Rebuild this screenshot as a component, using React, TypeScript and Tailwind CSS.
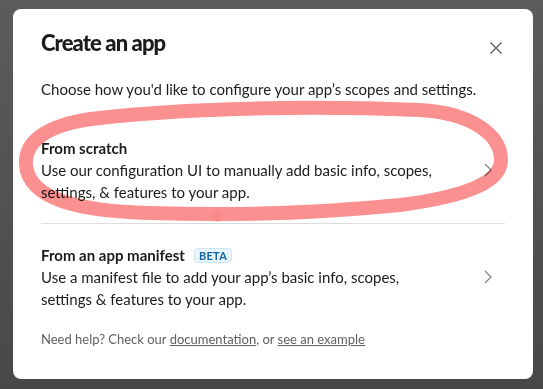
export default function App() {
  const font = { fontFamily: "Lato, 'Noto Sans', sans-serif" };

  return (
    <div
      className="relative min-h-[389px] w-full bg-gradient-to-b from-[#5c5c5c] to-[#484848] pt-[9px] pl-[13px] text-[#1d1c1d]"
      style={font}
    >
      {/* Modal */}
      <div className="w-[520px] h-[370px] rounded-lg bg-white px-7 pt-[19px] pb-8 flex flex-col">
        {/* Header */}
        <div className="flex items-start justify-between">
          <h1 className="text-[22px] leading-[30px] font-black tracking-[-0.9px]">Create an app</h1>
          <button className="mt-[14px] mr-[3px] text-[#616061]" aria-label="Close">
            <svg width="12" height="12" viewBox="0 0 12 12" fill="none">
              <path d="M0.5 0.5 L11.5 11.5 M11.5 0.5 L0.5 11.5" stroke="currentColor" strokeWidth="1.4" />
            </svg>
          </button>
        </div>

        <p className="mt-5 mb-[17px] text-[15px] leading-[22px]">
          Choose how you'd like to configure your app’s scopes and settings.
        </p>

        {/* From scratch */}
        <div className="flex items-center py-5 border-b border-[#dddddd]">
          <div className="flex-1">
            <div className="text-[15px] leading-[22px] font-bold">From scratch</div>
            <div className="max-w-[400px] text-[15px] leading-[22px]">
              Use our configuration UI to manually add basic info, scopes, settings, &amp; features to your app.
            </div>
          </div>
          <Chevron />
        </div>

        {/* From manifest */}
        <div className="flex items-center py-5">
          <div className="flex-1">
            <div className="flex items-center gap-[9px] text-[15px] leading-[22px] font-bold">
              From an app manifest
              <span className="rounded border border-[#cde5f1] bg-[#e8f5fa] px-[4px] text-[11px] leading-[13px] font-bold tracking-[0.3px] text-[#1264a3]">
                BETA
              </span>
            </div>
            <div className="max-w-[400px] text-[15px] leading-[22px]">
              Use a manifest file to add your app’s basic info, scopes, settings &amp; features to your app.
            </div>
          </div>
          <Chevron />
        </div>

        <p className="text-[13px] leading-[18px] text-[#616061]">
          Need help? Check our <span className="underline">documentation</span>, or{" "}
          <span className="underline">see an example</span>
        </p>
      </div>

      {/* Hand-drawn highlight */}
      <svg
        className="pointer-events-none absolute left-0 top-0 mix-blend-multiply"
        width="543"
        height="389"
        viewBox="0 0 543 389"
        fill="none"
      >
        <path
          d="M100 118 C180 109, 300 105, 420 110 C472 113, 501 135, 501 160 C501 181, 470 196, 400 205 C320 213, 240 216, 150 213 C80 211, 29 200, 26 165 C24 140, 50 123, 100 118 Z"
          stroke="#fb9090"
          strokeWidth="14"
          strokeLinecap="round"
          strokeLinejoin="round"
        />
        <circle cx="217" cy="216" r="5.5" fill="#f98a8a" />
      </svg>
    </div>
  );
}

function Chevron() {
  return (
    <svg className="mr-[13px] shrink-0 text-[#868686]" width="8" height="14" viewBox="0 0 8 14" fill="none">
      <path d="M1 1 L7 7 L1 13" stroke="currentColor" strokeWidth="1.3" />
    </svg>
  );
}
